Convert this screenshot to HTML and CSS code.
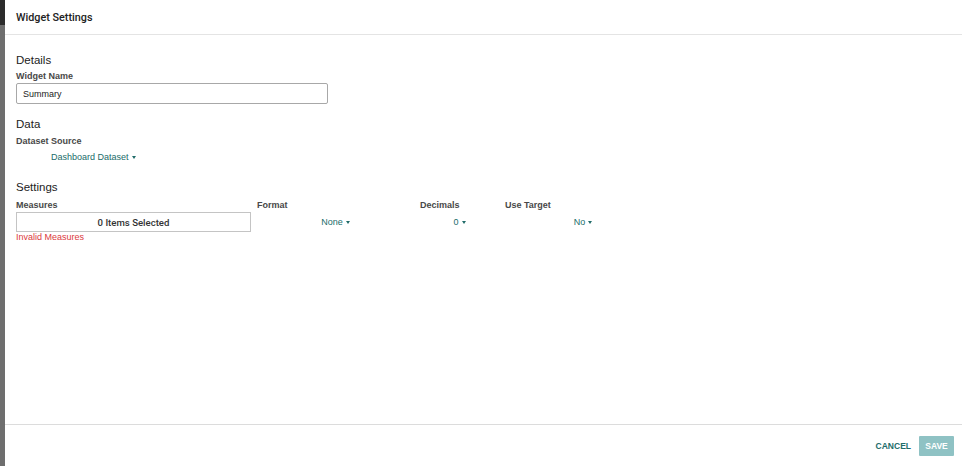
FILE: index.html
```html
<!DOCTYPE html>
<html lang="en">
<head>
  <meta charset="UTF-8">
  <title>Widget Settings</title>
  <link rel="stylesheet" href="styles.css">
</head>
<body>
  <div class="backdrop-strip"></div>
  <div class="modal">
    <div class="modal-header">Widget Settings</div>
    <div class="modal-body">
      <div class="section-title first">Details</div>
      <div class="field-label">Widget Name</div>
      <input class="text-input" type="text" value="Summary">

      <div class="section-title data">Data</div>
      <div class="field-label source">Dataset Source</div>
      <div class="dropdown source-dropdown">Dashboard Dataset<span class="caret"></span></div>

      <div class="section-title settings">Settings</div>
      <div class="settings-grid">
        <div class="field-label">Measures</div>
        <div class="field-label">Format</div>
        <div class="field-label">Decimals</div>
        <div class="field-label">Use Target</div>

        <div class="select-box">0 Items Selected</div>
        <div class="dropdown centered">None<span class="caret"></span></div>
        <div class="dropdown centered">0<span class="caret"></span></div>
        <div class="dropdown centered">No<span class="caret"></span></div>

        <div class="error-text">Invalid Measures</div>
      </div>
    </div>
    <div class="modal-footer">
      <button class="btn-link">Cancel</button>
      <button class="btn-save" disabled>Save</button>
    </div>
  </div>
</body>
</html>
```

FILE: styles.css
```css
html, body {
  height: 100%;
}

body {
  margin: 0;
  display: flex;
  background: #fff;
  font-family: 'Liberation Sans', Arial, sans-serif;
  color: #333;
  overflow: hidden;
}

.backdrop-strip {
  width: 5px;
  flex-shrink: 0;
  background: linear-gradient(#2c2c2c 0, #2c2c2c 25px, #6e6e6e 25px);
}

.modal {
  flex: 1;
  display: flex;
  flex-direction: column;
  background: #fff;
}

.modal-header {
  height: 35px;
  box-sizing: border-box;
  border-bottom: 1px solid #e4e4e4;
  padding: 0 11px;
  display: flex;
  align-items: center;
  font-family: Roboto, 'Liberation Sans', sans-serif;
  font-size: 10.8px;
  font-weight: 500;
  color: #222;
}

.modal-body {
  flex: 1;
  padding: 0 11px;
}

.section-title {
  font-size: 11.5px;
  line-height: 16px;
  color: #222;
}

.section-title.first {
  margin-top: 17px;
}

.section-title.data {
  margin-top: 12px;
}

.section-title.settings {
  margin-top: 16px;
}

.field-label {
  font-size: 9px;
  line-height: 12px;
  font-weight: bold;
  color: #484848;
  margin-top: 2px;
}

.field-label.source {
  margin-top: 3px;
}

.text-input {
  display: block;
  margin: 1px 0 0;
  width: 312px;
  height: 21px;
  box-sizing: border-box;
  border: 1px solid #a8a8a8;
  border-radius: 2px;
  padding: 0 6px;
  font-family: inherit;
  font-size: 9px;
  color: #222;
  outline: none;
}

.dropdown {
  font-size: 9px;
  line-height: 12px;
  color: #216c6a;
  display: flex;
  align-items: center;
}

.source-dropdown {
  margin: 4px 0 0 35px;
}

.caret {
  display: inline-block;
  width: 0;
  height: 0;
  margin-left: 3px;
  border-left: 2.5px solid transparent;
  border-right: 2.5px solid transparent;
  border-top: 3px solid #216c6a;
}

.settings-grid {
  margin-top: 4px;
  display: grid;
  grid-template-columns: 235px 157px 79px 156px;
  column-gap: 6px;
}

.settings-grid .field-label {
  margin-top: 0;
  margin-bottom: 1px;
}

.select-box {
  height: 20px;
  box-sizing: border-box;
  border: 1px solid #c4c4c4;
  display: flex;
  align-items: center;
  justify-content: center;
  font-family: Roboto, 'Liberation Sans', sans-serif;
  font-size: 9.6px;
  font-weight: 500;
  color: #333;
}

.dropdown.centered {
  justify-content: center;
}

.error-text {
  grid-column: 1;
  font-size: 9px;
  line-height: 11px;
  color: #dc3a40;
}

.modal-footer {
  height: 42px;
  box-sizing: border-box;
  border-top: 1px solid #dcdcdc;
  display: flex;
  align-items: center;
  justify-content: flex-end;
  gap: 8px;
  padding: 0 8px 0 0;
}

.btn-link, .btn-save {
  font-family: inherit;
  font-size: 8.5px;
  font-weight: bold;
  text-transform: uppercase;
  border: none;
  cursor: pointer;
  height: 20px;
  padding: 0;
}

.btn-link {
  background: none;
  color: #216c6a;
}

.btn-save {
  width: 35px;
  background: #8fc2c4;
  color: #fff;
  border-radius: 1px;
}
```
